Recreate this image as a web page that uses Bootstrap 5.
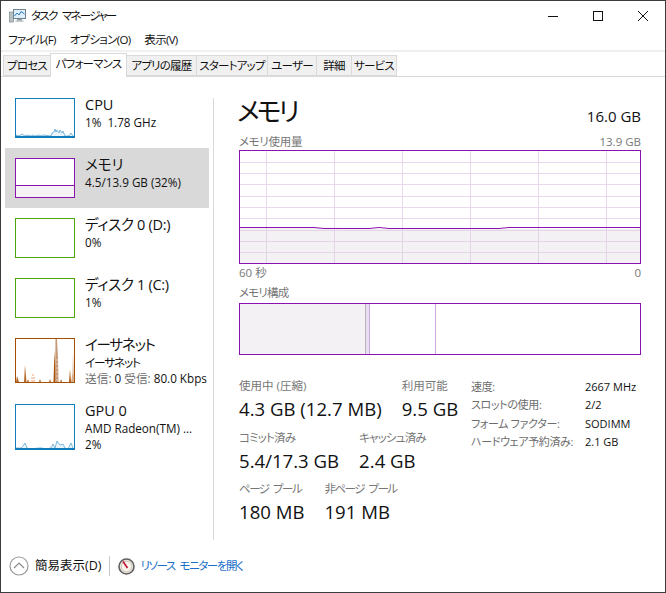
<!DOCTYPE html>
<html lang="ja"><head><meta charset="utf-8"><title>タスク マネージャー</title>
<link href="https://cdn.jsdelivr.net/npm/bootstrap@5.3.0/dist/css/bootstrap.min.css" rel="stylesheet">
<style>
html,body{margin:0;background:#fff}
body{font-family:"Open Sans","Noto Sans CJK JP",sans-serif;font-size:12px;line-height:16px;color:#111;font-feature-settings:"palt"}
.win{width:666px;height:593px;border:1px solid #3c3c3c;overflow:hidden;background:#fff}
.titlebar{height:29px;padding-left:8px}
.titlebar .ttl{font-size:11.5px;margin-left:5px;letter-spacing:-1.7px;word-spacing:4px}
.winbtn{width:45px;height:29px}
.menubar{height:20px;padding-left:7px;gap:14px;font-size:11.5px;letter-spacing:-.7px}
.tabstrip{height:27px;border-top:2px solid #f0f0f0;border-bottom:1px solid #d9d9d9;padding-left:2px}
.tabx{height:21px;margin-top:3px;background:#f0f0f0;border:1px solid #d9d9d9;border-left-width:0;font-size:11.5px;letter-spacing:-.8px;line-height:19px;text-align:center;color:#111;white-space:nowrap}
.tabx.first{border-left-width:1px}
.tabx.on{height:24px;margin-top:1px;background:#fff;line-height:20px;border-left-width:1px;border-bottom:0;margin-left:-1px}
.sidebar{width:212px;padding-top:11px;flex:none}
.item{width:204px;height:60px;margin-left:4px;padding:8px 0 0 10px;gap:10px}
.item.tall{height:66px}
.item.sel{background:#d9d9d9}
.thumb{display:block;margin-top:2px;flex:none}
.nm{font-size:14.5px;line-height:18px;white-space:nowrap}
.sb{font-size:11.7px;line-height:16px;white-space:nowrap}
.k1{letter-spacing:-.3px}
.k2{letter-spacing:-1.2px}
.mut{color:#6d6d6d}
.panel{flex:1;margin-top:21px;border-left:1px solid #d9d9d9;padding-left:25px;padding-right:24px;height:442px}
.panel-h{height:42px;margin-top:-6px}
.bigttl{font-size:26px;line-height:38px;letter-spacing:-3px;margin-left:-2px}
.capa{font-size:15px;line-height:20px;margin-top:14px}
.lab{font-size:11.5px;line-height:16px;color:#777;white-space:nowrap}
.lab.k3{letter-spacing:-.8px}
.lab.k4{letter-spacing:-1.5px;word-spacing:3px}
.chartbox{display:block}
.axis{margin-top:1px}
.lab2{margin-top:4px;margin-bottom:2px}
.stats{margin-top:23px}
.stl{width:232px;flex:none}
.vrow{gap:20px;height:51.5px}
.val{font-size:18.6px;line-height:24px;white-space:nowrap;margin-top:3px}
.spec{font-size:11px;line-height:18.4px;white-space:nowrap}
.spk{width:114px;color:#6d6d6d;letter-spacing:-.35px}
.foot{height:52px;padding-left:8px;font-size:12.5px}
.foot .txt{margin-left:6px}
.sepv{width:1px;height:20px;background:#c8c8c8;margin:0 8px}
.lnk{color:#1a6fc9;font-size:11.5px;margin-left:5px;letter-spacing:-1.4px;word-spacing:3px}
</style></head><body>
<div class="win d-flex flex-column">
  <div class="titlebar d-flex align-items-center">
    <svg width="17" height="16" viewBox="0 0 17 16"><rect x="0.5" y="4" width="4" height="10" fill="#b9c0c4" stroke="#7d8a90" stroke-width=".7"/><rect x="4.5" y="1.5" width="12" height="9" fill="#dfeef8" stroke="#6f8391"/><polyline points="5.5,8 8,5 10,7 12,3.5 15.5,6" fill="none" stroke="#2a7fc2" stroke-width="1"/><rect x="8" y="11" width="5" height="1.5" fill="#8c979d"/><rect x="6.5" y="12.5" width="8" height="1.2" fill="#aab3b8"/></svg>
    <span class="ttl">タスク マネージャー</span>
    <div class="ms-auto d-flex">
      <div class="winbtn d-flex align-items-center justify-content-center"><svg width="12" height="12" viewBox="0 0 12 12"><path d="M1 6.5h10" stroke="#111" fill="none"/></svg></div>
      <div class="winbtn d-flex align-items-center justify-content-center"><svg width="12" height="12" viewBox="0 0 12 12"><rect x="1.5" y="1.5" width="9" height="9" fill="none" stroke="#111"/></svg></div>
      <div class="winbtn d-flex align-items-center justify-content-center"><svg width="12" height="12" viewBox="0 0 12 12"><path d="M1 1l10 10M11 1L1 11" stroke="#111" fill="none"/></svg></div>
    </div>
  </div>
  <div class="menubar d-flex align-items-center"><span>ファイル(F)</span><span>オプション(O)</span><span>表示(V)</span></div>
  <div class="tabstrip d-flex">
    <div class="tabx first" style="width:48px">プロセス</div>
    <div class="tabx on" style="width:77px">パフォーマンス</div>
    <div class="tabx" style="width:70px">アプリの履歴</div>
    <div class="tabx" style="width:71px">スタートアップ</div>
    <div class="tabx" style="width:49px">ユーザー</div>
    <div class="tabx" style="width:35px">詳細</div>
    <div class="tabx" style="width:45px">サービス</div>
  </div>
  <div class="d-flex flex-grow-1">
    <div class="sidebar">
      <div class="item d-flex">
        <svg class="thumb" width="60" height="40" viewBox="0 0 60 40"><rect x=".5" y=".5" width="59" height="39" fill="#fff"/><polyline points="1,39 1,37 4,38 7,36 10,38 12,37 16,38 18,37 20,38 24,37 26,38 28,37 36,38 37,35 39,34 40,31 41,34 42,32 44,35 45,32 47,35 48,33 50,38 54,38 56,35 58,38 59,39" fill="#eaf4fa" stroke="#5ea8d6" stroke-width=".8"/><rect x=".5" y=".5" width="59" height="39" fill="none" stroke="#117dbb"/><path d="M1 38.5h59" stroke="#117dbb"/></svg>
        <div><div class="nm">CPU</div><div class="sb">1%&nbsp; 1.78 GHz</div></div>
      </div>
      <div class="item sel d-flex">
        <svg class="thumb" width="60" height="40" viewBox="0 0 60 40"><rect x=".5" y=".5" width="59" height="39" fill="#fff"/><rect x=".5" y="27.5" width="59" height="12" fill="#f4f2f4"/><path d="M0 27.5h60" stroke="#8b12ae"/><rect x=".5" y=".5" width="59" height="39" fill="none" stroke="#8b12ae"/></svg>
        <div><div class="nm">メモリ</div><div class="sb">4.5/13.9 GB (32%)</div></div>
      </div>
      <div class="item d-flex">
        <svg class="thumb" width="60" height="40" viewBox="0 0 60 40"><rect x=".5" y=".5" width="59" height="39" fill="#fff" stroke="#4da60c"/></svg>
        <div><div class="nm k1">ディスク 0 (D:)</div><div class="sb">0%</div></div>
      </div>
      <div class="item d-flex">
        <svg class="thumb" width="60" height="40" viewBox="0 0 60 40"><rect x=".5" y=".5" width="59" height="39" fill="#fff" stroke="#4da60c"/></svg>
        <div><div class="nm k1">ディスク 1 (C:)</div><div class="sb">1%</div></div>
      </div>
      <div class="item tall d-flex">
        <svg class="thumb" width="60" height="45" viewBox="0 0 60 45"><rect x=".5" y=".5" width="59" height="44" fill="#fff"/>
          <polygon points="1,44 2,38 4,44" fill="#b86a2c"/>
          <polygon points="9,44 10,27 11.5,44" fill="#b86a2c"/>
          <polygon points="12,44 13,41 14,44" fill="#b86a2c"/>
          <path d="M16 43h4M16 40h4M17 37h2" stroke="#f0a070" fill="none"/>
          <polygon points="24,44 25,41 26,44" fill="#b86a2c"/>
          <polygon points="34,44 35,41 36,44" fill="#b86a2c"/>
          <polygon points="38.5,44 39.5,13 41,44" fill="#a74f01"/>
          <polygon points="40,44 40.5,1 42,1 43,20 43.5,44" fill="#c49a78"/>
          <path d="M41 42h2M41 38h2M41 34h2M41 30h2M41 26h2M41 22h2" stroke="#f3c6a8" fill="none"/>
          <polygon points="45,44 46,41 47,44" fill="#b86a2c"/>
          <polygon points="54,44 55,31 56,44" fill="#b55c10"/>
          <polygon points="56,44 57.5,35 58,14 59,44" fill="#d6ad8c"/>
          <rect x=".5" y=".5" width="59" height="44" fill="none" stroke="#a74f01"/></svg>
        <div><div class="nm k2">イーサネット</div><div class="sb k2">イーサネット</div><div class="sb"><span class="mut">送信:</span> 0 <span class="mut">受信:</span> 80.0 Kbps</div></div>
      </div>
      <div class="item tall d-flex">
        <svg class="thumb" width="60" height="46" viewBox="0 0 60 46"><rect x=".5" y=".5" width="59" height="45" fill="#fff"/><polyline points="1,45 1,44 6,44 8,42 10,39 12,44 15,45 24,44 27,44 30,45 36,44 38,40 40,44 42,37 45,41 48,40 50,44 53,45 56,39 58,44 59,45" fill="#eaf4fa" stroke="#5ea8d6" stroke-width=".8"/><rect x=".5" y=".5" width="59" height="45" fill="none" stroke="#117dbb"/><path d="M1 44.5h59" stroke="#117dbb"/></svg>
        <div><div class="nm">GPU 0</div><div class="sb">AMD Radeon(TM) ...</div><div class="sb">2%</div></div>
      </div>
    </div>
    <div class="panel">
      <div class="panel-h d-flex justify-content-between align-items-start"><div class="bigttl">メモリ</div><div class="capa">16.0 GB</div></div>
      <div class="d-flex justify-content-between lab"><span class="k1">メモリ使用量</span><span>13.9 GB</span></div>
      <svg class="chartbox" width="402" height="114" viewBox="0 0 402 114">
        <rect width="402" height="114" fill="#fff"/>
        <path d="M1 77.5H100L105 79H205L212 78L225 79H395L401 77V113H1Z" fill="#f3f1f4"/>
        <g stroke="#e9d7ef" fill="none"><path d="M1 12.5H401M1 23.5H401M1 34.5H401M1 46.5H401M1 57.5H401M1 68.5H401"/><path d="M27.5 1V77M95.5 1V78M163.5 1V78M231.5 1V78M299.5 1V78M367.5 1V78"/></g>
        <g stroke="#e3d4e6" fill="none"><path d="M1 80.5H401M1 91.5H401M1 102.5H401"/><path d="M27.5 78V113M95.5 78V113M163.5 78V113M231.5 78V113M299.5 78V113M367.5 78V113"/></g>
        <path d="M1 77.5H75L85 78.5H130L140 77.5L150 78.5H260L270 77.5H401" fill="none" stroke="#8b12ae"/>
        <rect x=".5" y=".5" width="401" height="113" fill="none" stroke="#8b12ae"/>
      </svg>
      <div class="d-flex justify-content-between lab axis"><span>60 秒</span><span>0</span></div>
      <div class="lab lab2 k3">メモリ構成</div>
      <svg class="chartbox" width="402" height="52" viewBox="0 0 402 52">
        <rect width="402" height="52" fill="#fff"/>
        <rect x="1" y="1" width="126" height="50" fill="#f3f1f4"/>
        <rect x="127" y="1" width="4" height="50" fill="#e8dff0"/>
        <path d="M126.5 1V51" stroke="#b9b0c0"/><path d="M130.5 1V51M196.5 1V51" stroke="#cfa9df"/>
        <rect x=".5" y=".5" width="401" height="51" fill="none" stroke="#8b12ae"/>
      </svg>
      <div class="stats d-flex">
        <div class="stl">
          <div class="d-flex vrow"><div><div class="lab">使用中 (圧縮)</div><div class="val">4.3 GB (12.7 MB)</div></div><div><div class="lab">利用可能</div><div class="val">9.5 GB</div></div></div>
          <div class="d-flex vrow"><div><div class="lab k3">コミット済み</div><div class="val">5.4/17.3 GB</div></div><div><div class="lab k3">キャッシュ済み</div><div class="val">2.4 GB</div></div></div>
          <div class="d-flex vrow"><div><div class="lab k4">ページ プール</div><div class="val">180 MB</div></div><div><div class="lab k4">非ページ プール</div><div class="val">191 MB</div></div></div>
        </div>
        <div class="spec">
          <div class="d-flex"><div class="spk">速度:</div><div>2667 MHz</div></div>
          <div class="d-flex"><div class="spk">スロットの使用:</div><div>2/2</div></div>
          <div class="d-flex"><div class="spk">フォーム ファクター:</div><div>SODIMM</div></div>
          <div class="d-flex"><div class="spk">ハードウェア予約済み:</div><div>2.1 GB</div></div>
        </div>
      </div>
    </div>
  </div>
  <div class="foot d-flex align-items-center">
    <svg width="20" height="20" viewBox="0 0 20 20"><circle cx="10" cy="10" r="9" fill="#fff" stroke="#9a9a9a" stroke-width="1.2"/><path d="M5 12l5-5 5 5" fill="none" stroke="#8a8a8a" stroke-width="1.2"/></svg>
    <span class="txt">簡易表示(D)</span>
    <div class="sepv"></div>
    <svg width="17" height="17" viewBox="0 0 17 17"><circle cx="8.5" cy="8.5" r="7.5" fill="#ece7dc" stroke="#5f5f5f" stroke-width="1.6"/><circle cx="8.5" cy="8.5" r="5.2" fill="#f7f4ee" stroke="#b5b0a6" stroke-width=".6"/><path d="M5 3.5L9.5 10" stroke="#c8102e" stroke-width="1.6"/></svg>
    <span class="lnk">リソース モニターを開く</span>
  </div>
</div>
<script src="https://cdn.jsdelivr.net/npm/bootstrap@5.3.0/dist/js/bootstrap.bundle.min.js"></script>
</body></html>
